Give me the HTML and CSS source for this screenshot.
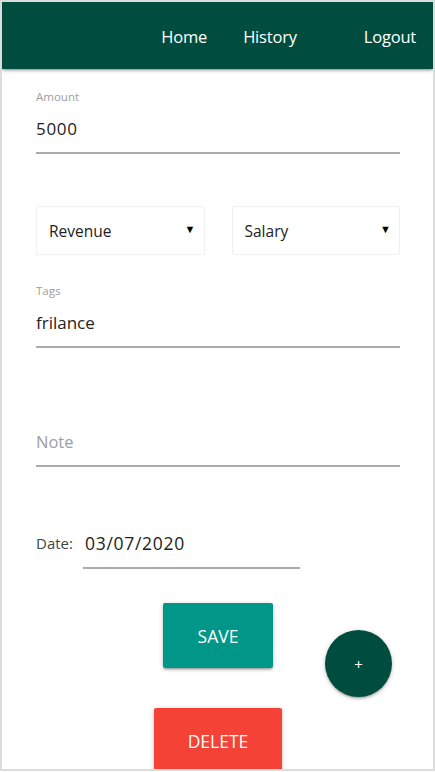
FILE: index.html
```html
<!DOCTYPE html>
<html>
<head>
<meta charset="utf-8">
<link rel="stylesheet" href="styles.css">
</head>
<body>
<div class="frame">
  <nav class="nav">
    <ul class="links">
      <li><a class="link">Home</a></li>
      <li><a class="link">History</a></li>
      <li class="logout-item"><a class="link">Logout</a></li>
    </ul>
  </nav>
  <main class="form">
    <div class="field amount">
      <div class="label">Amount</div>
      <div class="input digits">5000</div>
    </div>
    <div class="selects">
      <div class="select"><span>Revenue</span><span class="arrow">▼</span></div>
      <div class="select"><span>Salary</span><span class="arrow">▼</span></div>
    </div>
    <div class="field tags">
      <div class="label">Tags</div>
      <div class="input">frilance</div>
    </div>
    <div class="field note">
      <div class="input placeholder">Note</div>
    </div>
    <div class="date-row">
      <span class="date-label">Date:</span>
      <div class="input date-input digits">03/07/2020</div>
    </div>
    <div class="actions">
      <button class="btn save">SAVE</button>
      <button class="btn delete">DELETE</button>
    </div>
  </main>
  <button class="fab">+</button>
</div>
</body>
</html>
```
FILE: styles.css
```css
* { box-sizing: border-box; }
html, body { margin: 0; padding: 0; background: #fff; }
body {
  font-family: "Open Sans", "Noto Sans", sans-serif;
  color: #222;
}
.frame {
  position: relative;
  width: 435px;
  height: 771px;
  border: 2px solid #dcdcdc;
  overflow: hidden;
  background: #fff;
}
.nav {
  height: 67px;
  background: #004d40;
  box-shadow: 0 2px 2px 0 rgba(0,0,0,.14), 0 3px 1px -2px rgba(0,0,0,.12), 0 1px 5px 0 rgba(0,0,0,.2);
  display: flex;
  justify-content: flex-end;
  position: relative;
  z-index: 1;
}
.links {
  list-style: none;
  margin: 0;
  padding: 0 17px 0 0;
  display: flex;
  align-items: center;
}
.link {
  display: block;
  color: #fff;
  font-size: 16.5px;
  padding: 3px 18px 0;
  line-height: 64px;
  letter-spacing: -0.2px;
}
.logout-item { margin-left: 31px; }
.logout-item .link { padding-right: 0; }

.form {
  padding: 0 33px 0 34px;
}
.field.amount { margin-top: 20px; }
.label {
  font-size: 11.5px;
  line-height: 16px;
  color: #9e9e9e;
}
.input {
  height: 49px;
  line-height: 47px;
  border-bottom: 2px solid #ababab;
  font-size: 17px;
  color: #222;
}
.digits { letter-spacing: 0.7px; }
.placeholder { color: #9e9e9e; font-size: 16.5px; }
.selects {
  margin-top: 52px;
  display: flex;
  gap: 27px;
}
.select {
  flex: 1;
  height: 49px;
  border: 1px solid #f0f0f0;
  border-radius: 2px;
  display: flex;
  align-items: center;
  justify-content: space-between;
  padding: 0 8px 0 12px;
  font-size: 15.5px;
  color: #222;
}
.arrow { font-size: 11px; color: #000; margin-top: -4px; }
.field.tags { margin-top: 28px; }
.field.note { margin-top: 70px; }
.date-row {
  margin-top: 53px;
  display: flex;
  align-items: center;
}
.date-label {
  font-size: 15px;
  color: #444;
  width: 47px;
  margin-top: -4px;
}
.date-input {
  width: 217px;
  padding-left: 2px;
  line-height: 46px;
  font-size: 17.5px;
}
.actions {
  display: flex;
  flex-direction: column;
  align-items: center;
  gap: 40px;
  margin-top: 34px;
}
.btn {
  border: none;
  border-radius: 2px;
  color: #fff;
  font-family: inherit;
  font-size: 17.5px;
  height: 65px;
  box-shadow: 0 2px 2px 0 rgba(0,0,0,.14), 0 3px 1px -2px rgba(0,0,0,.12), 0 1px 5px 0 rgba(0,0,0,.2);
}
.save { background: #009688; width: 110px; }
.delete { background: #f44336; width: 128px; }
.fab {
  position: absolute;
  left: 323px;
  top: 628px;
  width: 67px;
  height: 67px;
  border-radius: 50%;
  border: none;
  background: #004d40;
  color: #fff;
  font-family: inherit;
  font-size: 15px;
  box-shadow: 0 2px 2px 0 rgba(0,0,0,.14), 0 3px 1px -2px rgba(0,0,0,.12), 0 1px 5px 0 rgba(0,0,0,.2);
}
```
